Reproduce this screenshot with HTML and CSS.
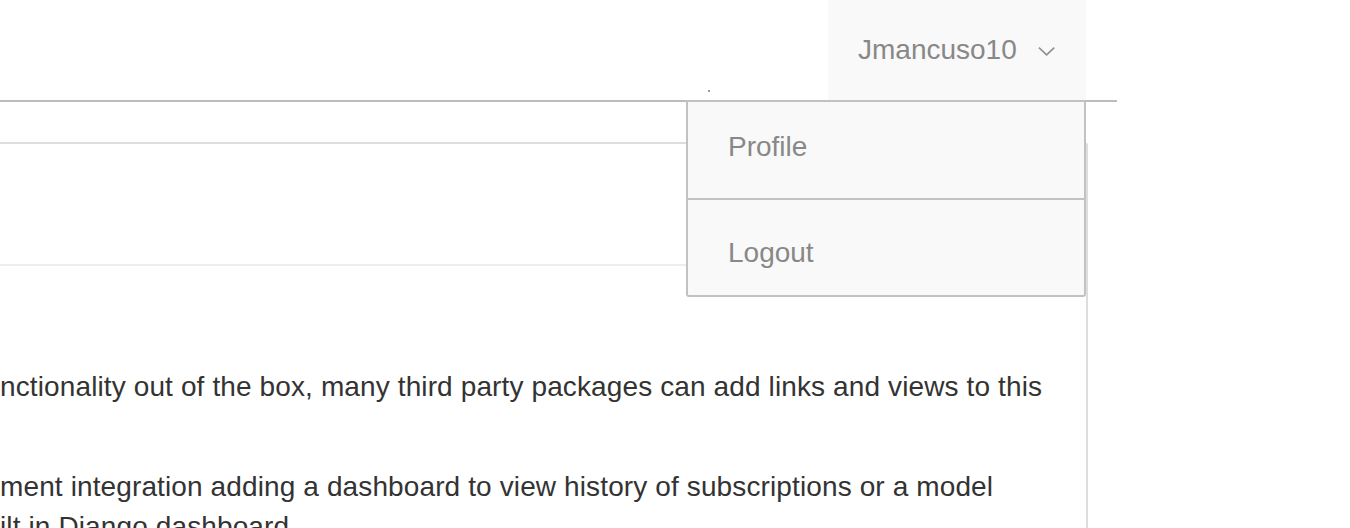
FILE: index.html
```html
<!DOCTYPE html>
<html lang="en">
<head>
<meta charset="utf-8">
<title>Dashboard</title>
<link rel="stylesheet" href="styles.css">
</head>
<body>
<div class="page">
  <header class="topbar">
    <span class="caret-dot"></span>
    <div class="user">
      <span class="user-name">Jmancuso10</span>
      <svg class="chevron" width="18" height="10" viewBox="0 0 18 10" aria-hidden="true">
        <path d="M1 1.5 L9 9 L17 1.5" fill="none" stroke="#8e8e8e" stroke-width="1.6"/>
      </svg>
    </div>
    <nav class="dropdown">
      <a class="dropdown-item first" href="#">Profile</a>
      <a class="dropdown-item last" href="#">Logout</a>
    </nav>
  </header>

  <section class="card">
    <div class="card-header"></div>
    <div class="card-body">
      <p class="para first">nctionality out of the box, many third party packages can add links and views to this</p>
      <p class="para">ment integration adding a dashboard to view history of subscriptions or a model<br>ilt in Django dashboard.</p>
    </div>
  </section>
</div>
</body>
</html>
```

FILE: styles.css
```css
html, body {
  margin: 0;
  padding: 0;
  background: #ffffff;
  overflow: hidden;
}

body {
  font-family: "Liberation Sans", Helvetica, Arial, sans-serif;
  color: #333333;
}

.page {
  width: 1117px;
}

.topbar {
  position: relative;
  height: 100px;
  border-bottom: 2px solid #bcbcbc;
  display: flex;
  justify-content: flex-end;
  padding-right: 31px;
}

.caret-dot {
  position: absolute;
  left: 708px;
  top: 90px;
  width: 2px;
  height: 2px;
  background: #9a9a9a;
}

.user {
  width: 258px;
  box-sizing: border-box;
  background: #f9f9f9;
  display: flex;
  align-items: center;
  padding: 0 31px 0 30px;
  gap: 21px;
}

.user-name {
  font-size: 28px;
  line-height: 32px;
  color: #888888;
}

.chevron {
  display: block;
  margin-top: 2px;
}

.dropdown {
  position: absolute;
  top: 100px;
  left: 686px;
  width: 400px;
  box-sizing: border-box;
  border: 2px solid #c2c2c2;
  border-radius: 0 0 3px 3px;
  background: #f9f9f9;
  display: flex;
  flex-direction: column;
  z-index: 2;
}

.dropdown-item {
  display: block;
  font-size: 28px;
  line-height: 32px;
  color: #888888;
  text-decoration: none;
  padding: 29px 40px 35px;
}

.dropdown-item.last {
  border-top: 2px solid #c2c2c2;
  padding: 37px 40px 26px;
}

.card {
  margin-top: 40px;
  width: 1088px;
  box-sizing: border-box;
  border-top: 2px solid #dddddd;
  border-right: 2px solid #dddddd;
  border-top-right-radius: 4px;
}

.card-header {
  height: 120px;
  border-bottom: 2px solid #eeeeee;
}

.card-body {
  padding-top: 101px;
}

.para {
  margin: 0;
  font-size: 28px;
  line-height: 40px;
  letter-spacing: 0.12px;
  color: #333333;
  white-space: nowrap;
}

.para.first {
  margin-bottom: 60px;
}
```
